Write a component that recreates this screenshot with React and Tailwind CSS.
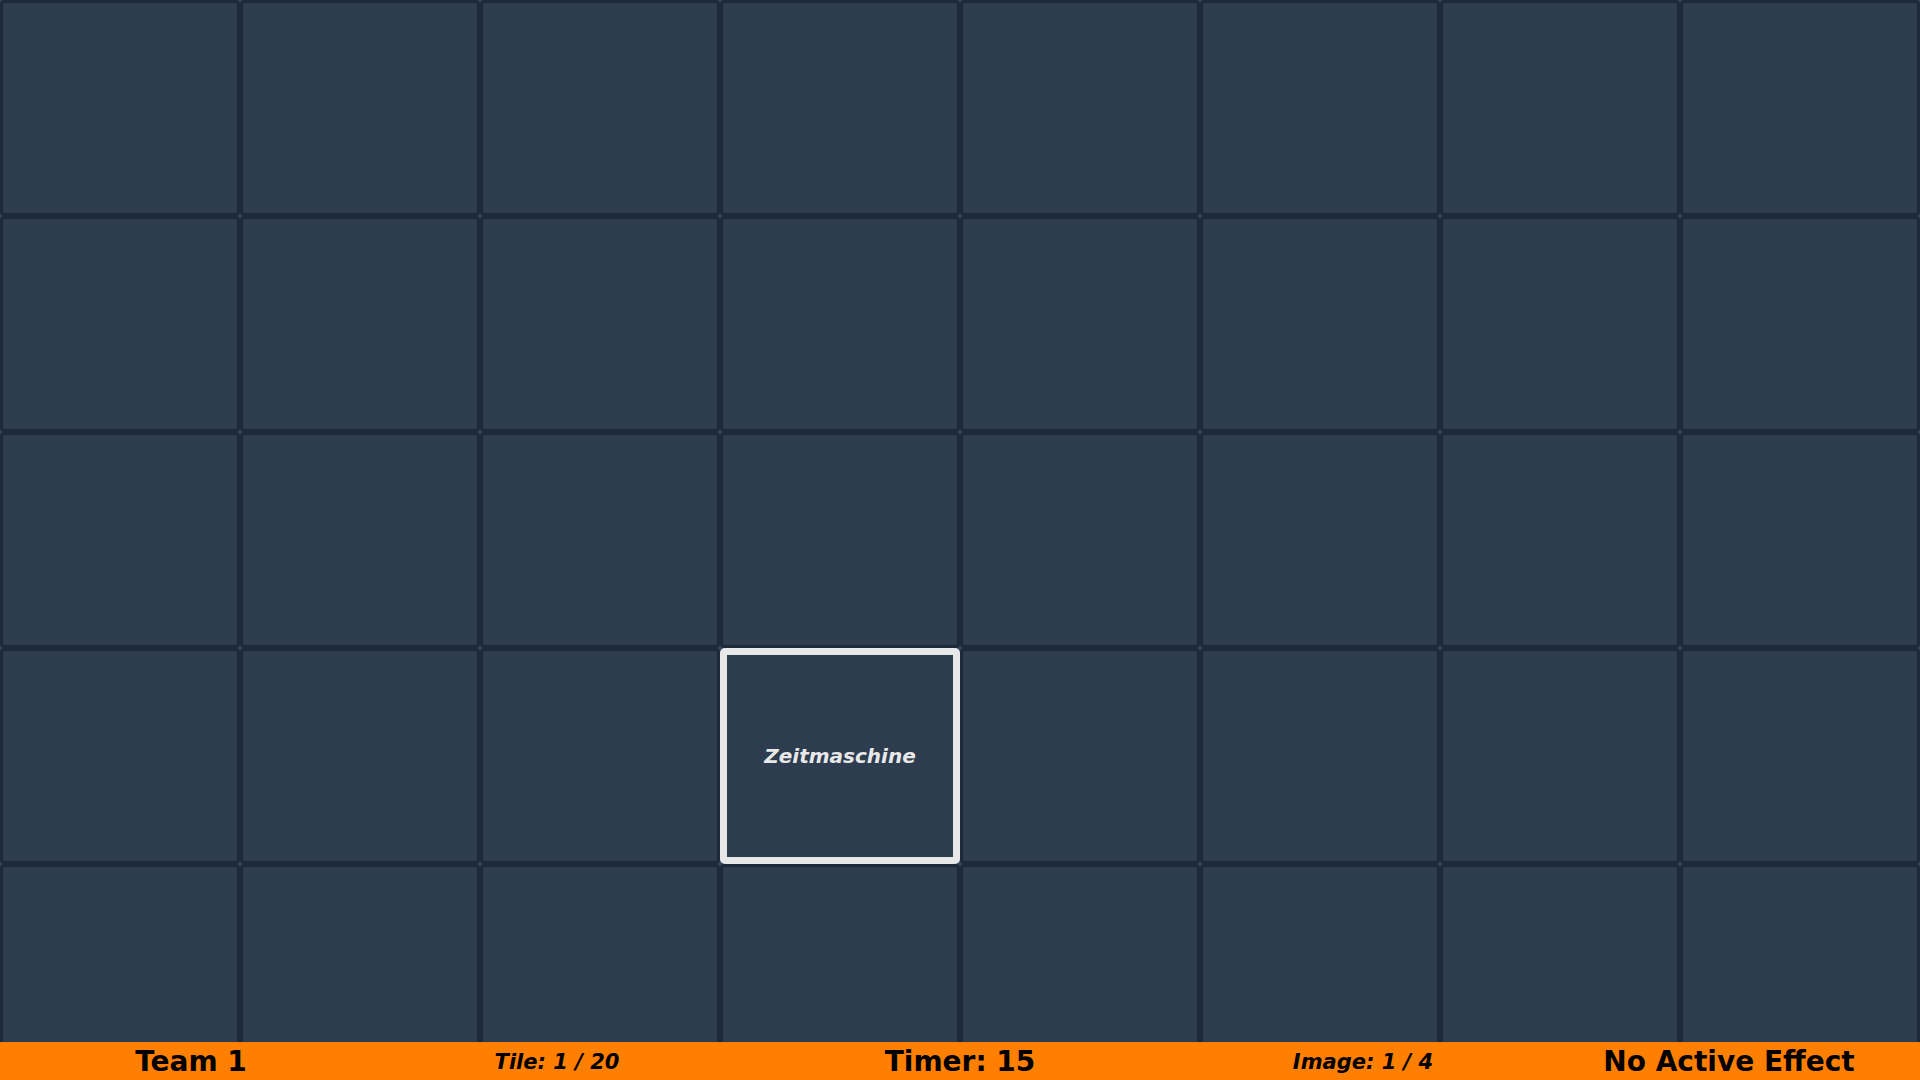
import React from "react";

const ROWS = 5;
const COLS = 8;
const activeIndex = 3 * COLS + 3;

const Tile = ({ active, label }) => {
  if (active) {
    return (
      <div className="flex items-center justify-center rounded-[5px] border-[7px] border-[#e8e8e8] bg-[#2d3c4f]">
        <span className="text-[20px] font-bold italic text-[#e8e8e8]">{label}</span>
      </div>
    );
  }
  return <div className="rounded-[4px] border-[3px] border-[#1d283b] bg-[#2d3c4f]" />;
};

const App = () => {
  const tiles = Array.from({ length: ROWS * COLS }, (_, i) => i);

  return (
    <div
      className="relative h-screen w-full overflow-hidden bg-[#3a4a5e]"
      style={{ fontFamily: '"DejaVu Sans", Verdana, sans-serif' }}
    >
      {/* Board */}
      <div className="grid h-full w-full grid-cols-8 grid-rows-5">
        {tiles.map((i) => (
          <Tile key={i} active={i === activeIndex} label="Zeitmaschine" />
        ))}
      </div>

      {/* Status bar */}
      <div className="absolute inset-x-0 bottom-0 grid h-[38px] grid-cols-[382fr_350fr_456fr_350fr_382fr] items-center bg-[#ff7f00] pt-[2px] text-black">
        <div className="text-center text-[28px] font-bold leading-none">Team 1</div>
        <div className="text-center text-[21px] font-bold italic leading-none">Tile: 1 / 20</div>
        <div className="text-center text-[28px] font-bold leading-none">Timer: 15</div>
        <div className="text-center text-[21px] font-bold italic leading-none">Image: 1 / 4</div>
        <div className="text-center text-[28px] font-bold leading-none">No Active Effect</div>
      </div>
    </div>
  );
};

export default App;
